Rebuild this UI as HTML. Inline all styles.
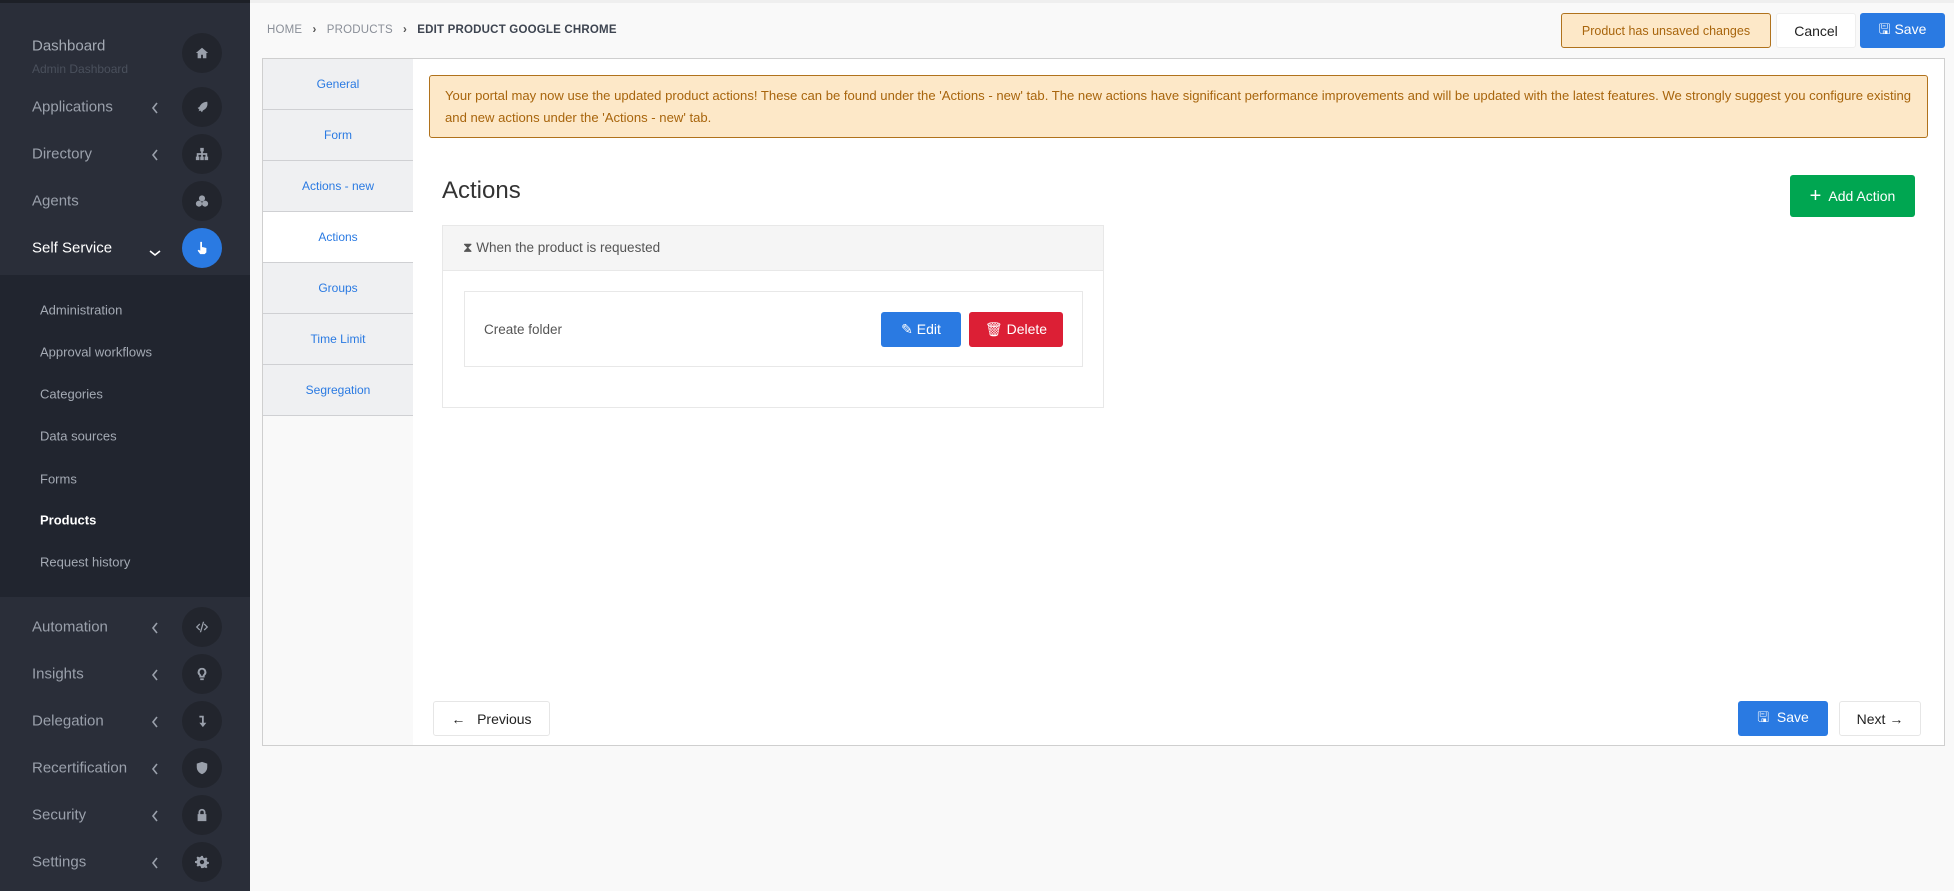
<!DOCTYPE html>
<html><head><meta charset="utf-8"><style>
*{box-sizing:border-box;margin:0;padding:0}
body{width:1954px;height:891px;overflow:hidden;background:#f9f9f9;font-family:"Liberation Sans",sans-serif;position:relative}
.a{position:absolute}
#sb{left:0;top:0;width:250px;height:891px;background:#2a2e39;border-top:3px solid #1d2027}
.mi{position:absolute;left:32px;font-size:15px;color:#9aa0ab;transform:translateY(-50%)}
.ch{position:absolute;left:151px;width:8px;height:12px;transform:translateY(-50%)}
.ch svg{width:8px;height:12px;fill:none;stroke:#9aa0ab;stroke-width:1.6}
.ci{position:absolute;left:182px;width:40px;height:40px;border-radius:50%;background:#22252d;transform:translateY(-50%);display:flex;align-items:center;justify-content:center}
.ci svg{width:14px;height:14px;fill:#9aa0ab}
#sub{left:0;top:272px;width:250px;height:322px;background:#21252f}
.si{position:absolute;left:40px;font-size:13px;color:#a4aab4;transform:translateY(-50%)}
.tab{position:absolute;left:263px;width:150px;height:51px;background:#eff0f2;border-bottom:1px solid #cfd0d3;font-size:12px;color:#2a7ae2;display:flex;align-items:center;justify-content:center}
.btn{position:absolute;display:flex;align-items:center;justify-content:center;border-radius:3px;font-size:14px}
</style></head><body>
<div class="a" style="left:250px;top:0;width:1704px;height:3px;background:#efefef"></div>
<div id="sb" class="a">
<div class="mi" style="top:43px;color:#a4aab4">Dashboard</div>
<div class="mi" style="top:66px;font-size:12px;color:#4a505c">Admin Dashboard</div>
<div class="ci" style="top:50px"><svg viewBox="0 0 16 16"><path d="M8 2L1 8h2v6h4v-4h2v4h4V8h2z"/></svg></div>
<div class="mi" style="top:104px">Applications</div><div class="ch" style="top:104px"><svg viewBox="0 0 8 12"><path d="M6 1L2 6l4 5"/></svg></div>
<div class="ci" style="top:104px"><svg viewBox="0 0 16 16"><path d="M14 2c-4 0-7 2-9 6l-2 1 2 2-1 2 2-1 2 2 1-2c4-2 6-5 5-10z"/></svg></div>
<div class="mi" style="top:151px">Directory</div><div class="ch" style="top:151px"><svg viewBox="0 0 8 12"><path d="M6 1L2 6l4 5"/></svg></div>
<div class="ci" style="top:151px"><svg viewBox="0 0 16 16"><path d="M6 1h4v4H9v2h5v4h1v4h-4v-4h1V9H9v2h1v4H6v-4h1V9H4v2h1v4H1v-4h1V7h5V5H6z"/></svg></div>
<div class="mi" style="top:198px">Agents</div>
<div class="ci" style="top:198px"><svg viewBox="0 0 16 16"><circle cx="8" cy="5" r="3.5"/><circle cx="4.5" cy="11" r="3.5"/><circle cx="11.5" cy="11" r="3.5"/></svg></div>
<div class="mi" style="top:245px;color:#fff">Self Service</div><div class="ch" style="top:245px;left:149px;width:12px;height:8px"><svg viewBox="0 0 12 8" style="width:12px;height:8px;stroke:#fff"><path d="M1 2l5 4 5-4"/></svg></div>
<div class="ci" style="top:245px;background:#2a7ae2"><svg viewBox="0 0 16 16" style="fill:#fff"><path d="M6 1h2v6h1l4 1v5l-2 2H6L3 11l1-1 2 1z"/></svg></div>
<div id="sub" class="a"></div>
<div class="si" style="top:307px">Administration</div>
<div class="si" style="top:349px">Approval workflows</div>
<div class="si" style="top:391px">Categories</div>
<div class="si" style="top:433px">Data sources</div>
<div class="si" style="top:476px">Forms</div>
<div class="si" style="top:517px;color:#fff;font-weight:bold">Products</div>
<div class="si" style="top:559px">Request history</div>
<div class="mi" style="top:624px">Automation</div><div class="ch" style="top:624px"><svg viewBox="0 0 8 12"><path d="M6 1L2 6l4 5"/></svg></div>
<div class="ci" style="top:624px"><svg viewBox="0 0 16 16"><path d="M5 4L1 8l4 4 1-1-3-3 3-3zm6 0l4 4-4 4-1-1 3-3-3-3zM9 2h1.5L7 14H5.5z"/></svg></div>
<div class="mi" style="top:671px">Insights</div><div class="ch" style="top:671px"><svg viewBox="0 0 8 12"><path d="M6 1L2 6l4 5"/></svg></div>
<div class="ci" style="top:671px"><svg viewBox="0 0 16 16"><path d="M8 1a5 5 0 00-3 9v2h6v-2a5 5 0 00-3-9zm0 2a3 3 0 012 5l-1 1v1H7V9L6 8a3 3 0 012-5zM6 13h4v2H6z"/></svg></div>
<div class="mi" style="top:718px">Delegation</div><div class="ch" style="top:718px"><svg viewBox="0 0 8 12"><path d="M6 1L2 6l4 5"/></svg></div>
<div class="ci" style="top:718px"><svg viewBox="0 0 16 16"><path d="M5 2h5v8h3l-4 5-4-5h3V4H5z"/></svg></div>
<div class="mi" style="top:765px">Recertification</div><div class="ch" style="top:765px"><svg viewBox="0 0 8 12"><path d="M6 1L2 6l4 5"/></svg></div>
<div class="ci" style="top:765px"><svg viewBox="0 0 16 16"><path d="M8 1l6 2v4c0 4-3 7-6 8-3-1-6-4-6-8V3z"/></svg></div>
<div class="mi" style="top:812px">Security</div><div class="ch" style="top:812px"><svg viewBox="0 0 8 12"><path d="M6 1L2 6l4 5"/></svg></div>
<div class="ci" style="top:812px"><svg viewBox="0 0 16 16"><path d="M4 7V5a4 4 0 018 0v2h1v8H3V7zm2 0h4V5a2 2 0 00-4 0z"/></svg></div>
<div class="mi" style="top:859px">Settings</div><div class="ch" style="top:859px"><svg viewBox="0 0 8 12"><path d="M6 1L2 6l4 5"/></svg></div>
<div class="ci" style="top:859px"><svg viewBox="0 0 16 16"><path d="M7 1h2l.5 2 1.5.7 1.8-1 1.4 1.4-1 1.8.7 1.6 2 .5v2l-2 .5-.7 1.5 1 1.8-1.4 1.4-1.8-1-1.5.7L9 15H7l-.5-2-1.5-.7-1.8 1-1.4-1.4 1-1.8L2.1 9.5 0 9V7l2-.5.7-1.6-1-1.8 1.4-1.4 1.8 1 1.6-.7zm1 4.5a2.5 2.5 0 100 5 2.5 2.5 0 000-5z"/></svg></div>
</div>

<div class="a" style="left:267px;top:24px;font-size:11.5px;color:#8a8f98;letter-spacing:.2px">HOME &nbsp;&nbsp;<b style="color:#555">›</b>&nbsp;&nbsp; PRODUCTS &nbsp;&nbsp;<b style="color:#555">›</b>&nbsp;&nbsp; <b style="color:#3d4450">EDIT PRODUCT GOOGLE CHROME</b></div>
<div class="btn" style="left:1561px;top:13px;width:210px;height:35px;background:#fde8c8;border:1px solid #b0721c;color:#a8650d;font-size:12.5px">Product has unsaved changes</div>
<div class="btn" style="left:1776px;top:13px;width:80px;height:35px;background:#fff;border:1px solid #eee;color:#222">Cancel</div>
<div class="btn" style="left:1860px;top:13px;width:85px;height:35px;background:#2a7ae2;color:#fff">🖫&nbsp;Save</div>

<div class="a" style="left:262px;top:58px;width:1683px;height:688px;border:1px solid #cfcfcf;background:#fff"></div>
<div class="a" style="left:263px;top:59px;width:150px;height:686px;background:#f9f9f9"></div>
<div class="tab" style="top:59px">General</div>
<div class="tab" style="top:110px">Form</div>
<div class="tab" style="top:161px">Actions - new</div>
<div class="tab" style="top:212px;background:#fff">Actions</div>
<div class="tab" style="top:263px">Groups</div>
<div class="tab" style="top:314px">Time Limit</div>
<div class="tab" style="top:365px">Segregation</div>

<div class="a" style="left:429px;top:75px;width:1499px;height:63px;background:#fde8c8;border:1px solid #b0721c;border-radius:3px;color:#a8650d;font-size:13.1px;line-height:22px;padding:9px 15px">Your portal may now use the updated product actions! These can be found under the 'Actions - new' tab. The new actions have significant performance improvements and will be updated with the latest features. We strongly suggest you configure existing and new actions under the 'Actions - new' tab.</div>
<div class="a" style="left:442px;top:177px;font-size:24px;color:#333">Actions</div>
<div class="btn" style="left:1790px;top:175px;width:125px;height:42px;background:#00a651;color:#fff;font-size:14px"><b style="font-size:20px;font-weight:normal">+</b>&nbsp; Add Action</div>

<div class="a" style="left:442px;top:225px;width:662px;height:183px;border:1px solid #e8e8e8;background:#fff"></div>
<div class="a" style="left:443px;top:226px;width:660px;height:45px;background:#f5f5f5;border-bottom:1px solid #e8e8e8;font-size:13.5px;color:#555;padding:14px 0 0 20px">⧗ When the product is requested</div>
<div class="a" style="left:464px;top:291px;width:619px;height:76px;border:1px solid #e8e8e8"></div>
<div class="a" style="left:484px;top:322px;font-size:13.5px;color:#555">Create folder</div>
<div class="btn" style="left:881px;top:312px;width:80px;height:35px;background:#2a7ae2;color:#fff">✎ Edit</div>
<div class="btn" style="left:969px;top:312px;width:94px;height:35px;background:#dc1f35;color:#fff">🗑 Delete</div>

<div class="btn" style="left:433px;top:701px;width:117px;height:35px;background:#fff;border:1px solid #e6e6e6;color:#222">←&nbsp;&nbsp; Previous</div>
<div class="btn" style="left:1738px;top:701px;width:90px;height:35px;background:#2a7ae2;color:#fff">🖫&nbsp; Save</div>
<div class="btn" style="left:1839px;top:701px;width:82px;height:35px;background:#fff;border:1px solid #e6e6e6;color:#222">Next →</div>
</body></html>
